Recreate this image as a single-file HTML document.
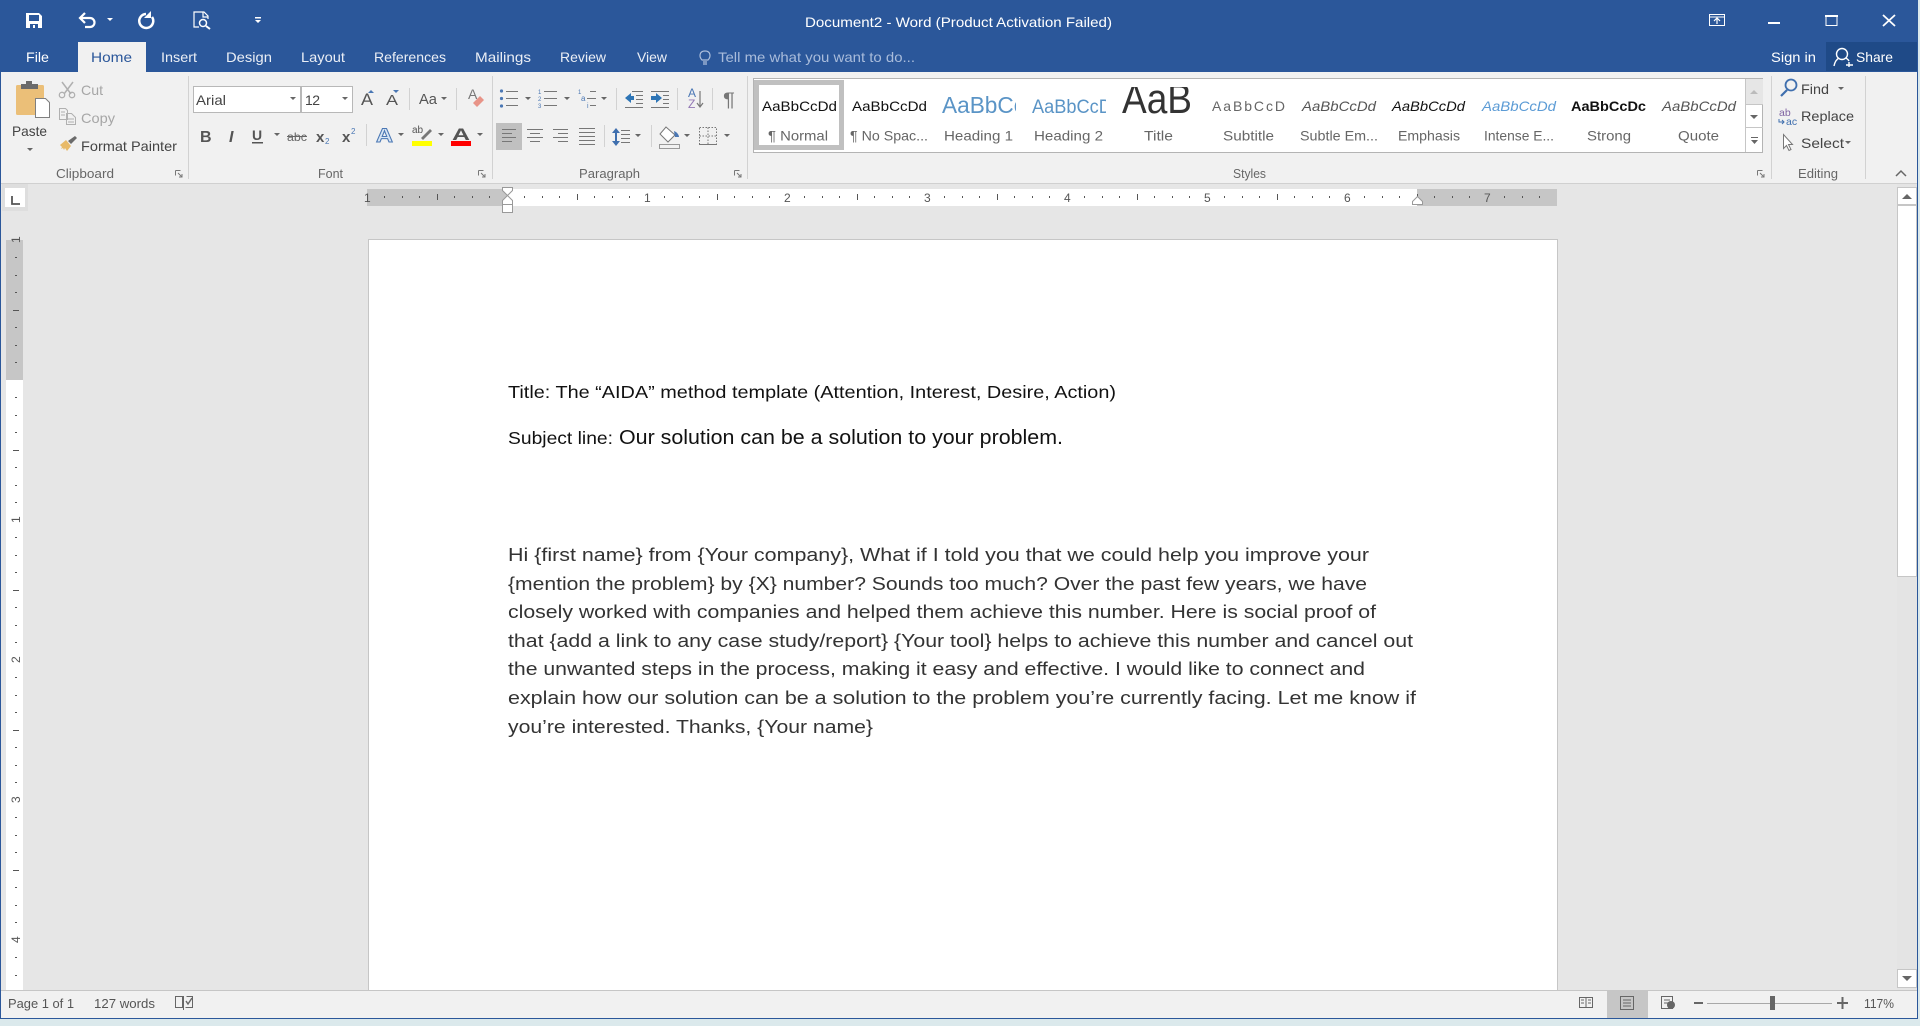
<!DOCTYPE html>
<html><head><meta charset="utf-8"><title>Document2 - Word</title>
<style>
html,body{margin:0;padding:0;width:1920px;height:1026px;overflow:hidden;background:#dbe9ec}
svg{position:absolute;left:0;top:0;display:block}
text{font-family:"Liberation Sans",sans-serif;white-space:pre}
.t{font-size:14px;fill:#fff}
.r{font-size:14px;fill:#444}
.d{font-size:14px;fill:#a6a6a6}
.g{font-size:13px;fill:#666}
.l{font-size:14px;fill:#666}
.p{font-size:14px;fill:#111}
.b{font-size:18.500px;fill:#333}
.k{font-size:11px;fill:#555}
.c{fill:#666}
.s{stroke:#666;fill:none}
.sep{fill:#d2d2d2}
</style></head><body>
<svg width="1920" height="1026" viewBox="0 0 1920 1026" xmlns="http://www.w3.org/2000/svg">
<defs>
<pattern id="hr" patternUnits="userSpaceOnUse" x="367" y="189" width="140" height="17">
<g fill="#555"><rect x="17" y="7" width="1" height="2"/><rect x="35" y="7" width="1" height="2"/><rect x="52" y="7" width="1" height="2"/><rect x="70" y="5" width="1" height="6"/><rect x="87" y="7" width="1" height="2"/><rect x="105" y="7" width="1" height="2"/><rect x="122" y="7" width="1" height="2"/></g>
</pattern>
<pattern id="vr" patternUnits="userSpaceOnUse" x="6" y="240" width="17" height="140">
<g fill="#555"><rect x="9" y="17" width="2" height="1"/><rect x="9" y="35" width="2" height="1"/><rect x="9" y="52" width="2" height="1"/><rect x="7" y="70" width="6" height="1"/><rect x="9" y="87" width="2" height="1"/><rect x="9" y="105" width="2" height="1"/><rect x="9" y="122" width="2" height="1"/></g>
</pattern>
<clipPath id="c1"><rect x="940" y="85" width="76" height="40"/></clipPath>
<clipPath id="c2"><rect x="1030" y="85" width="76" height="40"/></clipPath>
<clipPath id="c3"><rect x="1115" y="87" width="85" height="40"/></clipPath>
</defs>

<!-- window -->
<rect x="0" y="0" width="1918" height="1019" fill="#2b579a"/>
<rect x="1" y="72" width="1916" height="112" fill="#f1f1f1"/>
<rect x="1" y="183" width="1916" height="1" fill="#d0d0d0"/>
<rect x="1" y="184" width="1916" height="806" fill="#e6e6e6"/>
<rect x="1" y="990" width="1916" height="1" fill="#c6c6c6"/>
<rect x="1" y="991" width="1916" height="27" fill="#f1f1f1"/>

<!-- QAT -->
<path fill="#fff" fill-rule="evenodd" d="M26 13h13l3 3v12H26zM29 15v6h10v-6zM30 24v4h8v-4zM33 25h2v3h-2z"/>
<path d="M80 18H90a4.500 4.500 0 0 1 0 9H85M85 13l-5 5 5 5" stroke="#fff" stroke-width="2.200" fill="none"/>
<path d="M107 18h6l-3 3z" fill="#fff"/>
<path d="M146 14a7 7 0 1 0 6 3" stroke="#fff" stroke-width="2.500" fill="none"/>
<path d="M151 11v7h-7z" fill="#fff"/>
<path d="M199 27h-5V12h10l4 4v3M203 12v5h5" stroke="#fff" stroke-width="1.200" fill="none"/>
<circle cx="203" cy="23" r="3.500" stroke="#fff" stroke-width="1.500" fill="none"/>
<path d="M206 26l4 3" stroke="#fff" stroke-width="2"/>
<path d="M255 17h6v1.500h-6zM255 20h6l-3 3z" fill="#fff"/>

<text class="t" x="805" y="27" textLength="307" lengthAdjust="spacingAndGlyphs">Document2 - Word (Product Activation Failed)</text>

<!-- window controls -->
<path d="M1709.500 14.500h15v11h-15zM1709 17h16" stroke="#fff" fill="none"/>
<path d="M1717 24v-6M1714 21l3-3 3 3" stroke="#fff" stroke-width="1.200" fill="none"/>
<rect x="1768" y="22" width="12" height="2" fill="#fff"/>
<rect x="1826" y="15.500" width="11" height="10" stroke="#fff" fill="none"/><rect x="1825" y="15" width="13" height="2" fill="#fff"/>
<path d="M1883 15l12 11M1895 15l-12 11" stroke="#fff" stroke-width="1.800"/>

<!-- tabs -->
<rect x="78" y="42" width="68" height="30" fill="#f1f1f1"/>
<text class="t" x="26" y="62" textLength="23" lengthAdjust="spacingAndGlyphs">File</text>
<text class="t" x="91" y="62" textLength="41" lengthAdjust="spacingAndGlyphs" style="fill:#2b579a">Home</text>
<g style="opacity:.9">
<text class="t" x="161" y="62" textLength="36" lengthAdjust="spacingAndGlyphs">Insert</text>
<text class="t" x="226" y="62" textLength="46" lengthAdjust="spacingAndGlyphs">Design</text>
<text class="t" x="301" y="62" textLength="44" lengthAdjust="spacingAndGlyphs">Layout</text>
<text class="t" x="374" y="62" textLength="72" lengthAdjust="spacingAndGlyphs">References</text>
<text class="t" x="475" y="62" textLength="56" lengthAdjust="spacingAndGlyphs">Mailings</text>
<text class="t" x="560" y="62" textLength="46" lengthAdjust="spacingAndGlyphs">Review</text>
<text class="t" x="637" y="62" textLength="30" lengthAdjust="spacingAndGlyphs">View</text>
</g>
<path d="M702 60c-3-3-3-9 3-9s6 6 3 9zM703 62h4M703 64h4" stroke="#aebfdc" fill="none" stroke-width="1.200"/>
<text class="t" x="718" y="62" textLength="197" lengthAdjust="spacingAndGlyphs" style="fill:#a9bcdb">Tell me what you want to do...</text>
<text class="t" x="1771" y="62" textLength="45" lengthAdjust="spacingAndGlyphs">Sign in</text>
<rect x="1826" y="42" width="91" height="29" fill="#1f4a87"/>
<circle cx="1842" cy="54" r="5.500" stroke="#fff" stroke-width="1.400" fill="none"/>
<path d="M1834 66c1-5 3-7 5-8M1846 58c1 1 2 1 3 3M1849 62v5M1846 65h7" stroke="#fff" stroke-width="1.400" fill="none"/>
<text class="t" x="1856" y="62" textLength="37" lengthAdjust="spacingAndGlyphs">Share</text>

<!-- separators -->
<rect class="sep" x="188" y="76" width="1" height="103"/>
<rect class="sep" x="492" y="76" width="1" height="103"/>
<rect class="sep" x="747" y="76" width="1" height="103"/>
<rect class="sep" x="1771" y="76" width="1" height="103"/>
<rect class="sep" x="1865" y="76" width="1" height="103"/>
<rect class="sep" x="409" y="88" width="1" height="22"/>
<rect class="sep" x="456" y="88" width="1" height="22"/>
<rect class="sep" x="366" y="124" width="1" height="22"/>
<rect class="sep" x="616" y="88" width="1" height="22"/>
<rect class="sep" x="677" y="88" width="1" height="22"/>
<rect class="sep" x="712" y="88" width="1" height="22"/>
<rect class="sep" x="604" y="125" width="1" height="22"/>
<rect class="sep" x="651" y="125" width="1" height="22"/>

<!-- clipboard -->
<rect x="16" y="85" width="28" height="30" rx="1.500" fill="#ebbf78"/>
<path d="M21 89v-5h5v-3h6v3h6v5z" fill="#6b6b6b"/>
<path d="M35.500 98.500h10l4 4v15h-14z" fill="#fff" stroke="#7f7f7f"/>
<text class="r" x="12" y="136" textLength="35" lengthAdjust="spacingAndGlyphs">Paste</text>
<path d="M27 148h6l-3 3z" class="c"/>
<path d="M62 82l9 12M73 82l-9 12" stroke="#b0b0b0" stroke-width="1.500"/><circle cx="62" cy="95" r="2.700" stroke="#b0b0b0" fill="none" stroke-width="1.300"/><circle cx="72" cy="95" r="2.700" stroke="#b0b0b0" fill="none" stroke-width="1.300"/>
<text class="d" x="81" y="95" textLength="22" lengthAdjust="spacingAndGlyphs">Cut</text>
<path d="M59.500 108.500h6l2 2v9h-8zM66.500 113.500h5l4 4v7h-9zM61 112h4M61 115h4M68 119h6M68 122h6" stroke="#b0b0b0" fill="#f1f1f1"/>
<text class="d" x="81" y="123" textLength="34" lengthAdjust="spacingAndGlyphs">Copy</text>
<path d="M60 145l6-5 5 6-4 5-2-3-1 2-1-2-2 1 1-2z" fill="#e8ba68"/><path d="M68 141l7-5 2 2-6 6z" fill="#6b6b6b"/>
<text class="r" x="81" y="151" textLength="96" lengthAdjust="spacingAndGlyphs">Format Painter</text>
<text class="g" x="56" y="178" textLength="58" lengthAdjust="spacingAndGlyphs">Clipboard</text>
<path d="M175.500 170.500h5M175.500 170.500v5M178 173l4 4M182 174v3h-3" stroke="#777" fill="none"/>

<!-- font -->
<rect x="193.500" y="86.500" width="107" height="26" fill="#fff" stroke="#b8b8b8"/>
<rect x="301.500" y="86.500" width="51" height="26" fill="#fff" stroke="#b8b8b8"/>
<text class="r" x="196" y="105" textLength="30" lengthAdjust="spacingAndGlyphs">Arial</text>
<text class="r" x="305" y="105" textLength="15">12</text>
<path d="M290 97h6l-3 3zM342 97h6l-3 3zM441 97h6l-3 3zM274 133h6l-3 3zM398 133h6l-3 3zM438 133h6l-3 3zM477 133h6l-3 3zM525 97h6l-3 3zM564 97h6l-3 3zM601 97h6l-3 3zM635 134h6l-3 3zM684 134h6l-3 3zM724 134h6l-3 3z" class="c"/>
<text x="361" y="105" style="font-size:17px;fill:#555" textLength="12" lengthAdjust="spacingAndGlyphs">A</text>
<path d="M368 93l3-3 3 3z" fill="#4a77b4"/>
<text x="386" y="105" style="font-size:15px;fill:#555" textLength="12" lengthAdjust="spacingAndGlyphs">A</text>
<path d="M393 90h6l-3 3z" fill="#4a77b4"/>
<text x="419" y="104" style="font-size:15px;fill:#555" textLength="18" lengthAdjust="spacingAndGlyphs">Aa</text>
<text x="468" y="99" style="font-size:14px;fill:#777">A</text>
<path d="M473 103l7-7 4 4-7 7z" fill="#e89488"/>
<g transform="translate(0,-1)">
<text x="200" y="143" style="font-size:16px;font-weight:700;fill:#555">B</text>
<text x="229" y="143" style="font-size:16px;font-weight:700;font-style:italic;fill:#555">I</text>
<text x="252" y="141" style="font-size:14px;font-weight:700;fill:#555">U</text><rect x="252" y="143" width="11" height="1.500" fill="#555"/>
<text x="287" y="142" style="font-size:12px;fill:#666" textLength="20" lengthAdjust="spacingAndGlyphs">abc</text><rect x="287" y="137" width="20" height="1" fill="#666"/>
<text x="316" y="143" style="font-size:15px;font-weight:700;fill:#555">x</text><text x="325" y="145" style="font-size:8px;fill:#4a77b4">2</text>
<text x="342" y="143" style="font-size:15px;font-weight:700;fill:#555">x</text><text x="351" y="135" style="font-size:8px;fill:#4a77b4">2</text>
<text x="376" y="143" style="font-size:19px;font-weight:700;fill:#d8e6f5;stroke:#4a77b4;stroke-width:.9" textLength="17" lengthAdjust="spacingAndGlyphs">A</text>
<text x="412" y="134" style="font-size:10px;fill:#555">ab</text>
<path d="M421 139l9-9 2 2-9 9z" fill="#777"/>
<rect x="412" y="142" width="20" height="5" fill="#ffff00"/>
<text x="452" y="141" style="font-size:17px;font-weight:700;fill:#555" textLength="18" lengthAdjust="spacingAndGlyphs">A</text>
<rect x="451" y="142" width="20" height="5" fill="#f00"/>
</g>
<text class="g" x="318" y="178" textLength="25" lengthAdjust="spacingAndGlyphs">Font</text>
<path d="M478.500 170.500h5M478.500 170.500v5M481 173l4 4M485 174v3h-3" stroke="#777" fill="none"/>

<!-- paragraph -->
<g fill="#4a77b4"><circle cx="501.500" cy="91" r="1.600"/><circle cx="501.500" cy="98.500" r="1.600"/><circle cx="501.500" cy="106" r="1.600"/></g>
<path d="M506 91.500h12M506 98.500h12M506 105.500h12M544 91.500h13M544 98.500h13M544 105.500h13M590 91.500h6M587 98.500h9M590 105.500h6" stroke="#777"/>
<text x="538" y="94" style="font-size:6px;fill:#4a77b4">1</text><text x="538" y="101" style="font-size:6px;fill:#4a77b4">2</text><text x="538" y="108" style="font-size:6px;fill:#4a77b4">3</text>
<text x="578" y="94" style="font-size:6px;fill:#4a77b4">1</text><text x="581" y="101" style="font-size:8px;fill:#4a77b4">a</text><text x="587" y="108" style="font-size:7px;fill:#4a77b4">i</text>
<path d="M625 98l6-5v3h3v4h-3v3z" fill="#2e75b6"/><path d="M632 91.500h11M636 95.500h7M636 99.500h7M636 103.500h7M625 107.500h18" stroke="#777"/>
<path d="M662 98l-6-5v3h-5v4h5v3z" fill="#2e75b6"/><path d="M651 91.500h18M663 95.500h6M663 99.500h6M663 103.500h6M651 107.500h18" stroke="#777"/>
<text x="688" y="97" style="font-size:12px;fill:#4a77b4">A</text><text x="688" y="108" style="font-size:12px;fill:#9378b5">Z</text>
<path d="M700 91v16M697 103l3 4 3-4" stroke="#777" fill="none" stroke-width="1.200"/>
<text x="723" y="106" style="font-size:19px;fill:#777" textLength="12" lengthAdjust="spacingAndGlyphs">¶</text>
<rect x="496" y="123" width="26" height="27" fill="#c0c0c0"/>
<path d="M502 129.500h14M502 133.500h10M502 137.500h14M502 141.500h10M527 129.500h16M530 133.500h10M527 137.500h16M530 141.500h10M553 129.500h15M558 133.500h10M553 137.500h15M558 141.500h10M579 128.500h16M579 132.500h16M579 136.500h16M579 140.500h16M579 144.500h16M621 130.500h9M621 134.500h9M621 138.500h9M621 142.500h9" stroke="#777"/>
<path d="M616 128l4 5h-3v8h3l-4 5-4-5h3v-8h-3z" fill="#3f6fae"/>
<path d="M666 127l9 8-7 7-8-8z" fill="#fff" stroke="#777"/><path d="M674 131c3 1 5 4 5 6h-4z" fill="#4a77b4"/>
<rect x="659.500" y="144.500" width="20" height="4" fill="#f1f1f1" stroke="#999"/>
<path d="M699.500 127.500h17v17h-17zM708 127.500v17M699.500 136h17" stroke="#777" stroke-dasharray="1.500 1.500" fill="none"/><path d="M699 144.500h18" stroke="#777"/>
<text class="g" x="579" y="178" textLength="61" lengthAdjust="spacingAndGlyphs">Paragraph</text>
<path d="M734.500 170.500h5M734.500 170.500v5M737 173l4 4M741 174v3h-3" stroke="#777" fill="none"/>

<!-- styles gallery -->
<rect x="753.500" y="78.500" width="1009" height="74" fill="#fff" stroke="#b4b4b4"/>
<rect x="756.500" y="82.500" width="85" height="65" fill="#fff" stroke="#c0c0c0" stroke-width="5"/>
<rect x="1745" y="79" width="18" height="25" fill="#e6e6e6"/>
<path d="M1745.500 79v73M1745 104.500h18M1745 127.500h18" stroke="#c6c6c6"/>
<path d="M1750 94h8l-4-4z" fill="#bbb"/><path d="M1750 115h8l-4 4z" class="c"/><path d="M1751 137h7v1h-7zM1751 140h7l-3.500 4z" class="c"/>
<text class="p" x="762" y="111" textLength="75" lengthAdjust="spacingAndGlyphs">AaBbCcDd</text>
<text class="l" x="768" y="140.500" textLength="60" lengthAdjust="spacingAndGlyphs">¶ Normal</text>
<text class="p" x="852" y="111" textLength="75" lengthAdjust="spacingAndGlyphs">AaBbCcDd</text>
<text class="l" x="850" y="140.500" textLength="78" lengthAdjust="spacingAndGlyphs">¶ No Spac...</text>
<g clip-path="url(#c1)"><text x="942" y="113" style="font-size:23px;fill:#5a94c6" textLength="112" lengthAdjust="spacingAndGlyphs">AaBbCcDd</text></g>
<text class="l" x="944" y="140.500" textLength="69" lengthAdjust="spacingAndGlyphs">Heading 1</text>
<g clip-path="url(#c2)"><text x="1032" y="113" style="font-size:19px;fill:#5a94c6" textLength="90" lengthAdjust="spacingAndGlyphs">AaBbCcDd</text></g>
<text class="l" x="1034" y="140.500" textLength="69" lengthAdjust="spacingAndGlyphs">Heading 2</text>
<g clip-path="url(#c3)"><text x="1122" y="113" style="font-size:42px;fill:#333" textLength="70" lengthAdjust="spacingAndGlyphs">AaB</text></g>
<text class="l" x="1144" y="140.500" textLength="29" lengthAdjust="spacingAndGlyphs">Title</text>
<text x="1212" y="111" style="font-size:14px;fill:#666" textLength="73" lengthAdjust="spacing">AaBbCcD</text>
<text class="l" x="1223" y="140.500" textLength="51" lengthAdjust="spacingAndGlyphs">Subtitle</text>
<text x="1302" y="111" style="font-size:14px;font-style:italic;fill:#555" textLength="74" lengthAdjust="spacingAndGlyphs">AaBbCcDd</text>
<text class="l" x="1300" y="140.500" textLength="78" lengthAdjust="spacingAndGlyphs">Subtle Em...</text>
<text x="1392" y="111" style="font-size:14px;font-style:italic;fill:#111" textLength="73" lengthAdjust="spacingAndGlyphs">AaBbCcDd</text>
<text class="l" x="1398" y="140.500" textLength="62" lengthAdjust="spacingAndGlyphs">Emphasis</text>
<text x="1482" y="111" style="font-size:14px;font-style:italic;fill:#5b9bd5" textLength="74" lengthAdjust="spacingAndGlyphs">AaBbCcDd</text>
<text class="l" x="1484" y="140.500" textLength="70" lengthAdjust="spacingAndGlyphs">Intense E...</text>
<text x="1571" y="111" style="font-size:14px;font-weight:700;fill:#111" textLength="75" lengthAdjust="spacingAndGlyphs">AaBbCcDc</text>
<text class="l" x="1587" y="140.500" textLength="44" lengthAdjust="spacingAndGlyphs">Strong</text>
<text x="1662" y="111" style="font-size:14px;font-style:italic;fill:#555" textLength="74" lengthAdjust="spacingAndGlyphs">AaBbCcDd</text>
<text class="l" x="1678" y="140.500" textLength="41" lengthAdjust="spacingAndGlyphs">Quote</text>
<text class="g" x="1233" y="178" textLength="33" lengthAdjust="spacingAndGlyphs">Styles</text>
<path d="M1757.500 170.500h5M1757.500 170.500v5M1760 173l4 4M1764 174v3h-3" stroke="#777" fill="none"/>

<!-- editing -->
<circle cx="1791" cy="85" r="5.500" stroke="#3f6fae" stroke-width="1.800" fill="none"/><path d="M1787 90l-6 6" stroke="#3f6fae" stroke-width="2.200"/>
<text class="r" x="1801" y="94" textLength="28" lengthAdjust="spacingAndGlyphs">Find</text>
<path d="M1838 87h6l-3 3zM1845 141h6l-3 3z" class="c"/>
<text x="1779" y="116" style="font-size:10.500px;fill:#8064a2">ab</text>
<text x="1786" y="125" style="font-size:10.500px;fill:#3f6fae">ac</text>
<path d="M1779 119v3h5M1782 120l2 2-2 2" stroke="#3f6fae" fill="none"/>
<text class="r" x="1801" y="121" textLength="53" lengthAdjust="spacingAndGlyphs">Replace</text>
<path d="M1783.500 134.500v14l3-3 2.500 5 2-1-2.500-5h4z" fill="#fff" stroke="#777"/>
<text class="r" x="1801" y="148" textLength="43" lengthAdjust="spacingAndGlyphs">Select</text>
<text class="g" x="1798" y="178" textLength="40" lengthAdjust="spacingAndGlyphs">Editing</text>
<path d="M1896 176l5-5 5 5" stroke="#666" stroke-width="1.500" fill="none"/>

<!-- tab selector -->
<rect x="2" y="184" width="26" height="27" fill="#dedede"/>
<rect x="5" y="188" width="20" height="19" fill="#fff"/>
<path d="M12 196v8h8" stroke="#555" stroke-width="1.800" fill="none"/>

<!-- h ruler -->
<rect x="367" y="189" width="140" height="17" fill="#c6c6c6"/>
<rect x="507" y="189" width="910" height="17" fill="#fff"/>
<rect x="1417" y="189" width="140" height="17" fill="#c6c6c6"/>
<rect x="367" y="189" width="1190" height="17" fill="url(#hr)"/>
<g style="font-size:12px;fill:#555">
<text x="364" y="202">1</text><text x="644" y="202">1</text><text x="784" y="202">2</text><text x="924" y="202">3</text><text x="1064" y="202">4</text><text x="1204" y="202">5</text><text x="1344" y="202">6</text><text x="1484" y="202">7</text>
</g>
<path d="M502.500 187.500h10v3l-5 5-5-5zM502.500 204.500v-4l5-5 5 5v4zM502.500 204.500h10v8h-10z" fill="#fff" stroke="#999"/>
<path d="M1417.500 196.500l5 5v3h-10v-3z" fill="#fff" stroke="#999"/>

<!-- v ruler -->
<rect x="6" y="240" width="17" height="140" fill="#c6c6c6"/>
<rect x="6" y="380" width="17" height="610" fill="#fff"/>
<rect x="6" y="240" width="17" height="750" fill="url(#vr)"/>
<g style="font-size:12px;fill:#555">
<text transform="rotate(-90 20 243)" x="20" y="243">1</text>
<text transform="rotate(-90 20 523)" x="20" y="523">1</text>
<text transform="rotate(-90 20 663)" x="20" y="663">2</text>
<text transform="rotate(-90 20 803)" x="20" y="803">3</text>
<text transform="rotate(-90 20 943)" x="20" y="943">4</text>
</g>

<!-- page -->
<rect x="368.500" y="239.500" width="1189" height="760" fill="#fff" stroke="#c6c6c6"/>
<rect x="1" y="990" width="1916" height="1" fill="#c6c6c6"/>
<rect x="1" y="991" width="1916" height="27" fill="#f1f1f1"/>

<text x="508" y="398" style="font-size:17.500px;fill:#111" textLength="608" lengthAdjust="spacingAndGlyphs">Title: The “AIDA” method template (Attention, Interest, Desire, Action)</text>
<text x="508" y="444" style="font-size:17.500px;fill:#111" textLength="105" lengthAdjust="spacingAndGlyphs">Subject line:</text>
<text x="619" y="444" style="font-size:20px;fill:#111" textLength="444" lengthAdjust="spacingAndGlyphs">Our solution can be a solution to your problem.</text>
<text class="b" x="508" y="561" textLength="861" lengthAdjust="spacingAndGlyphs">Hi {first name} from {Your company}, What if I told you that we could help you improve your</text>
<text class="b" x="508" y="590" textLength="859" lengthAdjust="spacingAndGlyphs">{mention the problem} by {X} number? Sounds too much? Over the past few years, we have</text>
<text class="b" x="508" y="618" textLength="868" lengthAdjust="spacingAndGlyphs">closely worked with companies and helped them achieve this number. Here is social proof of</text>
<text class="b" x="508" y="647" textLength="905" lengthAdjust="spacingAndGlyphs">that {add a link to any case study/report} {Your tool} helps to achieve this number and cancel out</text>
<text class="b" x="508" y="675" textLength="857" lengthAdjust="spacingAndGlyphs">the unwanted steps in the process, making it easy and effective. I would like to connect and</text>
<text class="b" x="508" y="704" textLength="908" lengthAdjust="spacingAndGlyphs">explain how our solution can be a solution to the problem you’re currently facing. Let me know if</text>
<text class="b" x="508" y="733" textLength="365" lengthAdjust="spacingAndGlyphs">you’re interested. Thanks, {Your name}</text>

<!-- scrollbar -->
<rect x="1897" y="184" width="20" height="806" fill="#e4e4e4"/>
<rect x="1897.500" y="187.500" width="19" height="17" fill="#fff" stroke="#c6c6c6"/>
<path d="M1902 199h10l-5-5z" class="c"/>
<rect x="1897.500" y="205.500" width="19" height="371" fill="#fff" stroke="#c6c6c6"/>
<rect x="1897.500" y="969.500" width="19" height="18" fill="#fff" stroke="#c6c6c6"/>
<path d="M1902 976h10l-5 5z" class="c"/>

<!-- status bar -->
<text x="8" y="1008" style="font-size:13px;fill:#555" textLength="66" lengthAdjust="spacingAndGlyphs">Page 1 of 1</text>
<text x="94" y="1008" style="font-size:13px;fill:#555" textLength="61" lengthAdjust="spacingAndGlyphs">127 words</text>
<path d="M175.500 996.500h7v11h-7zM186.500 996.500h6v11h-7M183.500 996v14" stroke="#666" fill="none"/><path d="M186 1001l2 3 4-6" stroke="#666" stroke-width="1.400" fill="none"/>
<path d="M1579.500 997.500h13v10h-13zM1586 997v11M1581 1000h3M1581 1003h3M1588 1000h3M1588 1003h3" stroke="#666" fill="none"/>
<rect x="1607" y="991" width="41" height="27" fill="#c6c6c6"/>
<path d="M1620.500 996.500h13v13h-13zM1623 1000h8M1623 1003h8M1623 1006h8" stroke="#666" fill="none"/>
<path d="M1661.500 996.500h11v12h-11zM1664 1000h6M1664 1003h4" stroke="#666" fill="none"/><circle cx="1671" cy="1005" r="4" fill="#666"/>
<rect x="1694" y="1002" width="9" height="2" fill="#666"/>
<rect x="1707" y="1003" width="125" height="1" fill="#a8a8a8"/>
<rect x="1770" y="996" width="5" height="14" fill="#666"/>
<path d="M1837 1002h11v2h-11zM1841.500 997h2v12h-2z" fill="#666"/>
<text x="1864" y="1008" style="font-size:13px;fill:#555" textLength="30" lengthAdjust="spacingAndGlyphs">117%</text>
</svg>
</body></html>
